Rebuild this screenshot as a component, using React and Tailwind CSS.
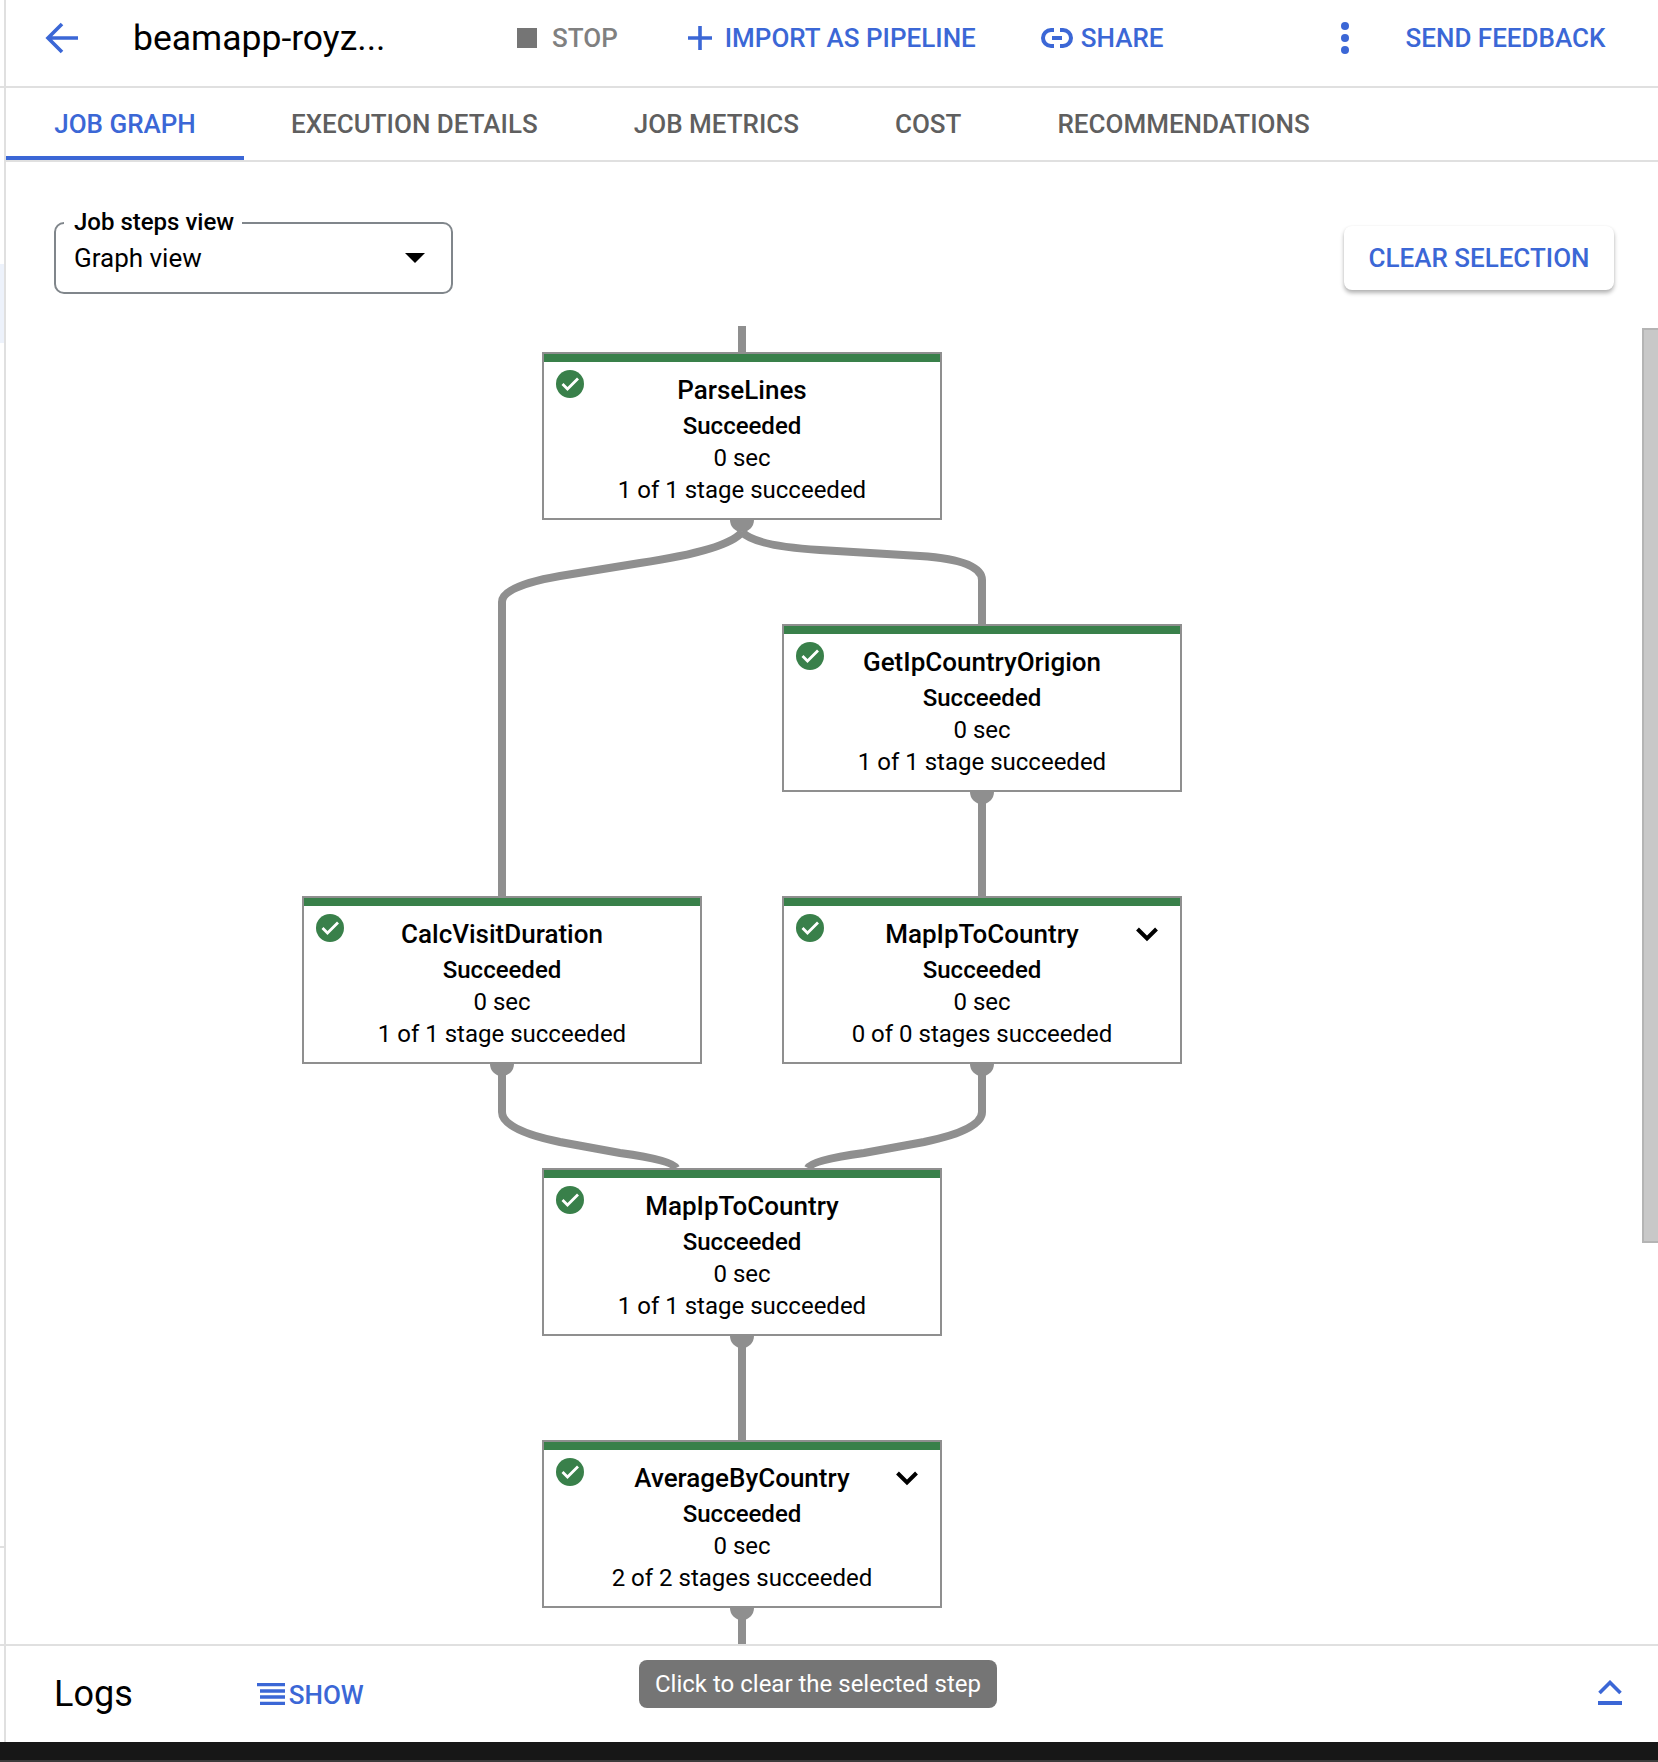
import React from 'react';

const BLUE = '#3b67d6';

const nodes = [
  { name: 'ParseLines', stages: '1 of 1 stage succeeded', col: 542, row: 352 },
  { name: 'GetIpCountryOrigion', stages: '1 of 1 stage succeeded', col: 782, row: 624 },
  { name: 'CalcVisitDuration', stages: '1 of 1 stage succeeded', col: 302, row: 896 },
  { name: 'MapIpToCountry', stages: '0 of 0 stages succeeded', col: 782, row: 896, expand: true },
  { name: 'MapIpToCountry', stages: '1 of 1 stage succeeded', col: 542, row: 1168 },
  { name: 'AverageByCountry', stages: '2 of 2 stages succeeded', col: 542, row: 1440, expand: true },
];

// edges are in page coordinates, the canvas starts at y=162
const edges = [
  'M742 326 L742 352',
  'M742 532 Q728 550 640 563 L560 576 Q502 586 502 602 L502 896',
  'M742 532 Q755 546 820 550 L920 556 Q982 560 982 580 L982 624',
  'M982 792 L982 896',
  'M502 1064 L502 1112 Q502 1130 560 1142 L620 1153 Q672 1160 676 1168',
  'M982 1064 L982 1112 Q982 1130 924 1142 L864 1153 Q812 1160 808 1168',
  'M742 1336 L742 1440',
  'M742 1608 L742 1644',
];

const dots = [
  [742, 520],
  [982, 792],
  [502, 1064],
  [982, 1064],
  [742, 1336],
  [742, 1608],
];

const CheckCircle = () => (
  <svg width="28" height="28" viewBox="0 0 28 28" className="block">
    <circle cx="14" cy="14" r="14" fill="#39804a" />
    <path d="M6.5 14 L11.5 19 L22 8.5" fill="none" stroke="#fff" strokeWidth="2.8" />
  </svg>
);

const GraphNode = ({ node }) => (
  <div
    className="absolute w-[400px] h-[168px] bg-white border-2 border-[#8f8f8f] text-center text-black"
    style={{ left: node.col - 6, top: node.row - 162 }}
  >
    <div className="h-[8px] bg-[#39804a]" />
    <div className="absolute left-[12px] top-[16px]">
      <CheckCircle />
    </div>
    {node.expand && (
      <svg width="24" height="16" viewBox="0 0 24 16" className="absolute right-[21px] top-[28px]">
        <path d="M2.5 3 L12 12.5 L21.5 3" fill="none" stroke="#000" strokeWidth="4" />
      </svg>
    )}
    <div className="text-[26px] leading-[36px] font-medium mt-[10px]">{node.name}</div>
    <div className="text-[24px] leading-[32px] font-medium mt-[2px]">Succeeded</div>
    <div className="text-[24px] leading-[32px]">0 sec</div>
    <div className="text-[24px] leading-[33px]">{node.stages}</div>
  </div>
);

const Tab = ({ children, active, className }) => (
  <div
    className={
      'h-full flex items-center justify-center text-[26px] font-medium ' +
      (active ? 'text-[#3b67d6] border-b-4 border-[#3b67d6] pt-[4px] ' : 'text-[#5f5f5f] ') +
      className
    }
  >
    {children}
  </div>
);

export default function App() {
  return (
    <div className="relative w-[1658px] h-[1762px] flex flex-col bg-white overflow-hidden font-['Roboto',sans-serif]">
      {/* leftovers of the page behind the panel, in the 4px gutter */}
      <div className="absolute left-0 top-[264px] w-[4px] h-[79px] bg-[#edf2fb]" />
      <div className="absolute left-0 top-[1546px] w-[4px] h-[2px] bg-[#e0e0e0]" />

      <div className="flex-1 flex flex-col min-h-0 ml-[4px] border-l-2 border-[#e0e0e0]">
        {/* header */}
        <div className="h-[88px] shrink-0 flex items-center border-b-2 border-[#e0e0e0] -ml-[6px] pl-[6px] pb-[10px] text-[26px] font-medium">
          <svg width="34" height="32" viewBox="0 0 34 32" className="ml-[39px] shrink-0">
            <path d="M33 16 L4 16 M17 2 L3 16 L17 30" fill="none" stroke={BLUE} strokeWidth="3.6" />
          </svg>
          <div className="ml-[54px] w-[384px] text-[35.5px] font-normal text-black pt-[2px]">beamapp-royz...</div>
          <div className="w-[20px] h-[20px] bg-[#757575] shrink-0" />
          <span className="ml-[15px] text-[#808080]">STOP</span>
          <svg width="24" height="24" viewBox="0 0 24 24" className="ml-[70px] shrink-0">
            <path d="M12 0 L12 24 M0 12 L24 12" stroke={BLUE} strokeWidth="3.6" />
          </svg>
          <span className="ml-[13px]" style={{ color: BLUE }}>IMPORT AS PIPELINE</span>
          <svg width="32" height="20" viewBox="0 0 32 20" className="ml-[65px] shrink-0">
            <path
              d="M13 2 L10 2 A8 8 0 0 0 10 18 L13 18 M19 2 L22 2 A8 8 0 0 1 22 18 L19 18 M11 10 L21 10"
              fill="none"
              stroke={BLUE}
              strokeWidth="4"
            />
          </svg>
          <span className="ml-[8px]" style={{ color: BLUE }}>SHARE</span>
          <div className="ml-[177px] flex flex-col gap-[4px] shrink-0">
            <div className="w-[8px] h-[8px] rounded-full bg-[#3b67d6]" />
            <div className="w-[8px] h-[8px] rounded-full bg-[#3b67d6]" />
            <div className="w-[8px] h-[8px] rounded-full bg-[#3b67d6]" />
          </div>
          <span className="ml-[57px]" style={{ color: BLUE }}>SEND FEEDBACK</span>
        </div>

        {/* tabs */}
        <div className="h-[74px] shrink-0 flex border-b-2 border-[#e0e0e0]">
          <Tab active className="w-[238px]">JOB GRAPH</Tab>
          <Tab className="ml-[47px]">EXECUTION DETAILS</Tab>
          <Tab className="ml-[96px]">JOB METRICS</Tab>
          <Tab className="ml-[96px]">COST</Tab>
          <Tab className="ml-[96px]">RECOMMENDATIONS</Tab>
        </div>

        {/* job graph */}
        <div className="relative flex-1 min-h-0 overflow-hidden">
          <div className="absolute left-[48px] top-[60px] w-[399px] h-[72px] border-2 border-[#80868b] rounded-[10px] pl-[18px] flex items-center text-[26px] text-black">
            <div className="absolute -top-[17px] left-[8px] pl-[10px] pr-[8px] bg-white text-[24px] leading-[30px] font-medium">Job steps view</div>
            <span className="mt-[1px]">Graph view</span>
            <div className="absolute right-[26px] top-[29px] w-0 h-0 border-l-[10px] border-r-[10px] border-t-[10px] border-l-transparent border-r-transparent border-t-black" />
          </div>

          <div
            className="absolute left-[1338px] top-[64px] w-[270px] h-[64px] rounded-[8px] bg-white flex items-center justify-center text-[26px] font-medium shadow-[0_3px_4px_rgba(0,0,0,0.3),0_0_2px_rgba(0,0,0,0.05)]"
            style={{ color: BLUE }}
          >
            CLEAR SELECTION
          </div>

          <div className="absolute right-0 top-[166px] w-[16px] h-[915px] bg-[#c8c8c8] border-l-2 border-t-2 border-b-2 border-[#b4b4b4]" />

          <svg
            width="1652"
            height="1482"
            viewBox="6 162 1652 1482"
            className="absolute left-0 top-0"
            fill="none"
          >
            {edges.map((d, i) => (
              <path key={i} d={d} stroke="#8f8f8f" strokeWidth="8" />
            ))}
            {dots.map(([x, y], i) => (
              <path key={i} d={`M${x - 12} ${y} A12 12 0 0 0 ${x + 12} ${y} Z`} fill="#8f8f8f" />
            ))}
          </svg>

          {nodes.map((node, i) => (
            <GraphNode key={i} node={node} />
          ))}
        </div>

        {/* logs */}
        <div className="relative h-[98px] shrink-0 flex items-center border-t-2 border-[#e0e0e0] -ml-[6px] pl-[6px]">
          <span className="ml-[48px] text-[36px] text-black">Logs</span>
          <svg width="28" height="22" viewBox="0 0 28 22" className="ml-[124px] shrink-0">
            <path d="M0 1.5 H28 M3 8 H28 M3 14 H28 M3 20.5 H28" stroke={BLUE} strokeWidth="3.4" />
          </svg>
          <span className="ml-[4px] text-[26px] font-medium mt-[3px]" style={{ color: BLUE }}>SHOW</span>
          <div className="absolute left-[639px] top-[14px] w-[358px] h-[48px] rounded-[8px] bg-[#757575] text-white text-[24px] flex items-center justify-center">
            Click to clear the selected step
          </div>
          <svg width="24" height="26" viewBox="0 0 24 26" className="absolute left-[1598px] top-[34px]">
            <path d="M1.5 13 L12 2.5 L22.5 13" fill="none" stroke={BLUE} strokeWidth="3.6" />
            <path d="M0 23 H24" stroke={BLUE} strokeWidth="4" />
          </svg>
        </div>
      </div>
      <div className="h-[18px] shrink-0 bg-[#171717]" />
      <div className="h-[2px] shrink-0 bg-[#3c3c3c]" />
    </div>
  );
}
